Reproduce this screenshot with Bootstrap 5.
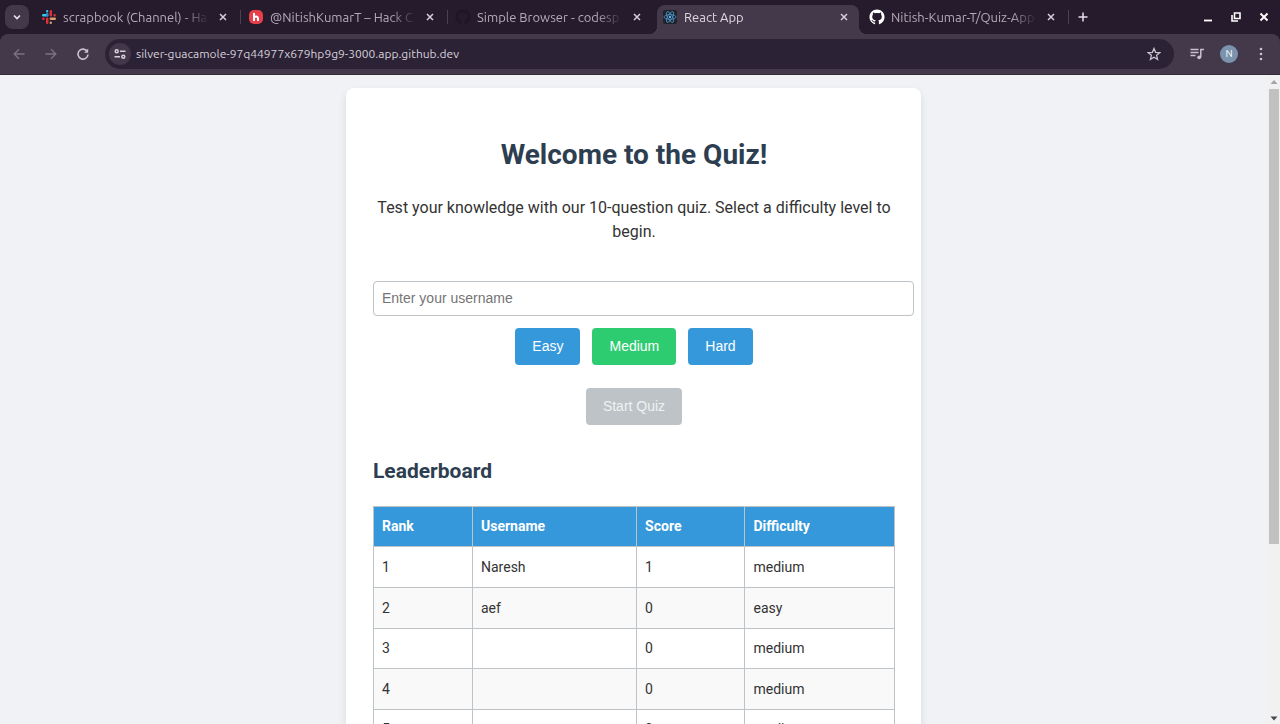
<!DOCTYPE html>
<html lang="en">
<head>
<meta charset="utf-8">
<meta name="viewport" content="width=device-width, initial-scale=1">
<title>React App</title>
<link href="https://cdn.jsdelivr.net/npm/bootstrap@5.3.0/dist/css/bootstrap.min.css" rel="stylesheet">
<style>
  body { font-family: Roboto, sans-serif; background: #f0f2f5; color: #333; }
  button { border: 0; padding: 0; background: none; }
  svg { display: block; flex: none; }

  /* browser chrome */
  .chrome-ui { font-family: Ubuntu, "Noto Sans", sans-serif; font-size: 12px; line-height: 18px; background: #261b2c; color: #b3abb9; }
  .strip { height: 34px; padding-left: 5px; }
  .tab-search { width: 24px; height: 24px; border-radius: 8px; background: #42384a; color: #e6e0ea; margin-right: 5px; }
  .tabs-row { min-width: 0; }
  .tab-item { flex: 0 1 207px; min-width: 0; gap: 6px; padding: 0 10px 0 7px; height: 24px; position: relative; }
  .tab-item.ruled::after { content: ""; position: absolute; right: 0; top: 5px; width: 1px; height: 14px; background: #4b4153; }
  .tab-item a { font-size: 13px; color: inherit; text-decoration: none; white-space: nowrap; overflow: hidden; flex: 1; min-width: 0;
    -webkit-mask-image: linear-gradient(90deg, #000 82%, transparent); mask-image: linear-gradient(90deg, #000 82%, transparent); }
  .tab-item button { width: 16px; height: 16px; color: #d6cfdb; }
  .tab-item.current { color: #ded8e2; z-index: 0; }
  .tab-item.current::before { content: ""; position: absolute; z-index: -1; inset: 0 3px -5px 2px; border-radius: 8px 8px 0 0; background: #44394b; }
  .flare { position: absolute; bottom: -5px; width: 8px; height: 8px; }
  .flare.start { left: -6px; background: radial-gradient(circle at 0 0, transparent 8px, #44394b 8px); }
  .flare.end { right: -5px; background: radial-gradient(circle at 100% 0, transparent 8px, #44394b 8px); }
  .new-tab, .win button { width: 28px; height: 28px; color: #e6e0ea; }
  .win { padding-right: 2px; }
  .toolbar { height: 41px; padding: 0 3px; background: #44394b; border-radius: 8px 8px 0 0; border-bottom: 1px solid #352b3c; }
  .tool { width: 32px; height: 32px; color: #c9c2ce; }
  .tool:disabled { color: #7c7283; }
  .omnibox { height: 30px; border-radius: 15px; background: #2c2235; color: #d6d0da; margin: 0 7px 0 6px; padding: 0 4px; }
  .omnibox input { border: 0; outline: 0; background: none; color: inherit; padding: 0; flex: 1; min-width: 0; }
  .site-info { width: 22px; height: 22px; border-radius: 50%; background: #42384a; color: #d6d0da; margin-right: 5px; }
  .avatar { width: 18px; height: 18px; border-radius: 50%; background: #7b93ad; color: #fff; font-size: 10px; line-height: 18px; }

  /* quiz page */
  .page-area { min-height: 0; }
  .viewport { overflow-y: auto; scrollbar-width: none; padding-top: 13px; }
  .viewport::-webkit-scrollbar { display: none; }
  .quiz { max-width: 575px; background: #fff; border-radius: 8px; padding: 26px 26px 26px 27px; box-shadow: 0 4px 8px rgba(0,0,0,.1); }
  .quiz h1 { font-size: 28px; line-height: 40px; font-weight: 700; color: #2c3e50; margin: 21px 0; }
  .intro { font-size: 16px; line-height: 24px; margin: 0 0 37px; }
  .quiz input { display: block; width: calc(100% + 19px); height: 35px; border: 1px solid #bdc3c7; border-radius: 4px; padding: 0 8px 2px;
    font: 14px "Liberation Sans", Arial, sans-serif; }
  .quiz input::placeholder { color: #757575; opacity: 1; }
  .choices { gap: 12px; margin: 12px 0 23px; }
  .quiz .btn { font: 14px/17px "Liberation Sans", Arial, sans-serif; padding: 10px 17px; height: 37px; border: 0; border-radius: 4px; color: #fff; background: #3498db; }
  .quiz .btn.chosen { background: #2ecc71; }
  .quiz .btn:disabled { background: #bdc3c7; opacity: 1; color: #f0f2f3; }
  .quiz h2 { font-size: 21px; line-height: 30px; font-weight: 700; color: #2c3e50; margin: 31px 0 20px; }
  .board { font-size: 14px; line-height: 23px; width: 100%; border-collapse: collapse; }
  .board th, .board td { border: 1px solid #bdc3c7; padding: 8px; }
  .board tbody tr { height: 41px; }
  .board tbody tr:nth-child(even) { background: #f9f9f9; }
  .board tbody tr:nth-child(odd):not(:first-child) { height: 40px; }
  .board th { background: #3498db; color: #fff; }
  .rail { width: 13px; background: #f1f1f1; padding: 5px 2px 3px; }
  .thumb { width: 10px; background: #c1c1c1; flex: 0 0 71%; }
</style>
</head>
<body>
<div class="d-flex flex-column vh-100 overflow-hidden">
  <header class="chrome-ui">
    <div class="strip d-flex align-items-center">
      <button class="tab-search d-flex align-items-center justify-content-center" aria-label="Search tabs"><svg width="10" height="10" viewBox="0 0 10 10" fill="none" stroke="currentColor" stroke-width="1.7"><path d="M2 3.5 5 6.5 8 3.5"/></svg></button>
      <nav class="tabs-row d-flex flex-grow-1 align-items-center" aria-label="Tabs">
        <div class="tab-item ruled d-flex align-items-center">
          <svg width="16" height="16" viewBox="0 0 16 16" fill="none" stroke-width="2.4" stroke-linecap="round"><path stroke="#36c5f0" d="M2.200 6.300h4M6.200 2.200v.1"/><path stroke="#2590c8" d="M6.200 5v1"/><path stroke="#e0303f" d="M9.800 2.200v4M13.600 6.200v.1"/><path stroke="#d9a06a" d="M9.800 9.800h4M9.800 13.600v.1"/><path stroke="#e0303f" d="M6.200 9.800v4M2.400 9.800v.1"/></svg>
          <a href="#">scrapbook (Channel) - Ha</a>
          <button class="d-flex align-items-center justify-content-center" aria-label="Close"><svg width="8" height="8" viewBox="0 0 8 8" stroke="currentColor" stroke-width="1.5"><path d="m1 1 6 6M7 1 1 7"/></svg></button>
        </div>
        <div class="tab-item ruled d-flex align-items-center">
          <svg width="16" height="16" viewBox="0 0 16 16"><rect x="1" y="1" width="14" height="14" rx="5" fill="#e8404a"/><path d="M6 4v8M6 9.500c0-2.500 4-2.800 4 0V12" fill="none" stroke="#fff" stroke-width="2"/></svg>
          <a href="#">@NitishKumarT – Hack C</a>
          <button class="d-flex align-items-center justify-content-center" aria-label="Close"><svg width="8" height="8" viewBox="0 0 8 8" stroke="currentColor" stroke-width="1.5"><path d="m1 1 6 6M7 1 1 7"/></svg></button>
        </div>
        <div class="tab-item d-flex align-items-center">
          <svg width="16" height="16" viewBox="-.5 -.5 17 17" fill="#1d1624"><path d="M8 0C3.580 0 0 3.580 0 8c0 3.540 2.290 6.530 5.470 7.590.4.070.55-.17.55-.38 0-.19-.01-.82-.01-1.490-2.010.37-2.530-.49-2.690-.94-.09-.23-.48-.94-.82-1.130-.28-.15-.68-.52-.01-.53.63-.01 1.080.58 1.230.82.72 1.210 1.870.87 2.330.66.07-.52.28-.87.51-1.070-1.780-.2-3.640-.89-3.640-3.950 0-.87.31-1.590.82-2.150-.08-.2-.36-1.020.08-2.120 0 0 .67-.21 2.200.82.64-.18 1.320-.27 2-.27s1.360.09 2 .27c1.530-1.040 2.200-.82 2.200-.82.44 1.100.16 1.920.08 2.120.51.56.82 1.270.82 2.150 0 3.070-1.870 3.750-3.650 3.950.29.25.54.73.54 1.480 0 1.070-.01 1.930-.01 2.200 0 .21.15.46.55.38A8 8 0 0 0 16 8c0-4.420-3.580-8-8-8"/></svg>
          <a href="#">Simple Browser - codesp</a>
          <button class="d-flex align-items-center justify-content-center" aria-label="Close"><svg width="8" height="8" viewBox="0 0 8 8" stroke="currentColor" stroke-width="1.5"><path d="m1 1 6 6M7 1 1 7"/></svg></button>
        </div>
        <div class="tab-item current d-flex align-items-center">
          <span class="flare start"></span><span class="flare end"></span>
          <svg width="16" height="16" viewBox="0 0 16 16"><rect x="1" y="1" width="14" height="14" rx="2" fill="#20232a"/><g fill="none" stroke="#4f96d0" stroke-width=".8"><ellipse cx="8" cy="8" rx="6" ry="2.400"/><ellipse cx="8" cy="8" rx="6" ry="2.400" transform="rotate(60 8 8)"/><ellipse cx="8" cy="8" rx="6" ry="2.400" transform="rotate(120 8 8)"/></g><circle cx="8" cy="8" r="1.200" fill="#61bdfb"/></svg>
          <a href="#">React App</a>
          <button class="d-flex align-items-center justify-content-center" aria-label="Close"><svg width="8" height="8" viewBox="0 0 8 8" stroke="currentColor" stroke-width="1.5"><path d="m1 1 6 6M7 1 1 7"/></svg></button>
        </div>
        <div class="tab-item ruled d-flex align-items-center">
          <svg width="16" height="16" viewBox="-.5 -.5 17 17" fill="#fff"><path d="M8 0C3.580 0 0 3.580 0 8c0 3.540 2.290 6.530 5.470 7.590.4.070.55-.17.55-.38 0-.19-.01-.82-.01-1.490-2.010.37-2.530-.49-2.690-.94-.09-.23-.48-.94-.82-1.130-.28-.15-.68-.52-.01-.53.63-.01 1.080.58 1.230.82.72 1.210 1.870.87 2.330.66.07-.52.28-.87.51-1.070-1.780-.2-3.640-.89-3.640-3.950 0-.87.31-1.590.82-2.150-.08-.2-.36-1.020.08-2.120 0 0 .67-.21 2.200.82.64-.18 1.320-.27 2-.27s1.360.09 2 .27c1.530-1.040 2.200-.82 2.200-.82.44 1.100.16 1.920.08 2.120.51.56.82 1.270.82 2.150 0 3.070-1.870 3.750-3.650 3.950.29.25.54.73.54 1.480 0 1.070-.01 1.930-.01 2.200 0 .21.15.46.55.38A8 8 0 0 0 16 8c0-4.420-3.580-8-8-8"/></svg>
          <a href="#">Nitish-Kumar-T/Quiz-App</a>
          <button class="d-flex align-items-center justify-content-center" aria-label="Close"><svg width="8" height="8" viewBox="0 0 8 8" stroke="currentColor" stroke-width="1.5"><path d="m1 1 6 6M7 1 1 7"/></svg></button>
        </div>
        <button class="new-tab d-flex align-items-center justify-content-center" aria-label="New tab"><svg width="10" height="10" viewBox="0 0 10 10" stroke="currentColor" stroke-width="1.5"><path d="M5 .5v9M.5 5h9"/></svg></button>
      </nav>
      <div class="win d-flex">
        <button class="d-flex align-items-center justify-content-center" aria-label="Minimize"><svg width="10" height="10" viewBox="0 0 10 10" stroke="#fff" stroke-width="1.8"><path d="M1 8.500h8"/></svg></button>
        <button class="d-flex align-items-center justify-content-center" aria-label="Restore"><svg width="10" height="10" viewBox="0 0 10 10" fill="none" stroke="#fff" stroke-width="1.600"><path d="M3.500 1h5.500v5.500H3.500zM1 3v6h6"/></svg></button>
        <button class="d-flex align-items-center justify-content-center" aria-label="Close window"><svg width="10" height="10" viewBox="0 0 10 10" stroke="#fff" stroke-width="1.900"><path d="m1.500 1.500 7 7M8.500 1.500l-7 7"/></svg></button>
      </div>
    </div>
    <div class="toolbar d-flex align-items-center">
      <button class="tool d-flex align-items-center justify-content-center" disabled aria-label="Back"><svg width="12" height="12" viewBox="0 0 12 12" fill="none" stroke="currentColor" stroke-width="1.300"><path d="M11.500 6H1.500M6 1.200 1.200 6 6 10.800"/></svg></button>
      <button class="tool d-flex align-items-center justify-content-center" disabled aria-label="Forward"><svg width="12" height="12" viewBox="0 0 12 12" fill="none" stroke="currentColor" stroke-width="1.300"><path d="M.5 6h10M6 1.200 10.800 6 6 10.800"/></svg></button>
      <button class="tool d-flex align-items-center justify-content-center" aria-label="Reload"><svg width="12" height="12" viewBox="0 0 12 12" fill="none" stroke="currentColor" stroke-width="1.600"><path d="M10.400 3.700A5 5 0 1 0 11 6.500"/><path d="M11.200.6v4.100H7.100z" fill="currentColor" stroke="none"/></svg></button>
      <div class="omnibox d-flex align-items-center flex-grow-1">
        <button class="site-info d-flex align-items-center justify-content-center" aria-label="Site information"><svg width="12" height="12" viewBox="0 0 12 12" fill="none" stroke="currentColor" stroke-width="1.500"><circle cx="2.700" cy="3.200" r="1.500"/><path d="M6 3.200h5.500M.5 8.800H6"/><circle cx="9.300" cy="8.800" r="1.500"/></svg></button>
        <input type="text" aria-label="Address" value="silver-guacamole-97q44977x679hp9g9-3000.app.github.dev">
        <button class="tool d-flex align-items-center justify-content-center" aria-label="Bookmark"><svg width="14" height="14" viewBox="0 0 14 14" fill="none" stroke="currentColor" stroke-width="1.300"><path d="m7 1.500 1.600 3.800 4.100.35-3.100 2.700.95 4L7 10.200l-3.550 2.150.95-4-3.100-2.700 4.100-.35z"/></svg></button>
      </div>
      <button class="tool d-flex align-items-center justify-content-center" aria-label="Media"><svg width="14" height="12" viewBox="0 0 14 12" fill="none" stroke="currentColor" stroke-width="1.500"><path d="M.5 1.500h8M.5 4.500h8M.5 7.500h5M10.800 9V1.500H14"/><circle cx="9.200" cy="9.300" r="1.900" fill="currentColor" stroke="none"/></svg></button>
      <button class="tool d-flex align-items-center justify-content-center" aria-label="Profile"><span class="avatar">N</span></button>
      <button class="tool d-flex align-items-center justify-content-center" aria-label="Menu"><svg width="4" height="14" viewBox="0 0 4 14" fill="currentColor"><circle cx="2" cy="2" r="1.300"/><circle cx="2" cy="7" r="1.300"/><circle cx="2" cy="12" r="1.300"/></svg></button>
    </div>
  </header>

  <div class="page-area d-flex flex-grow-1">
    <main class="viewport flex-grow-1">
      <section class="quiz mx-auto">
        <h1 class="text-center">Welcome to the Quiz!</h1>
        <p class="intro text-center">Test your knowledge with our 10-question quiz. Select a difficulty level to begin.</p>
        <input type="text" placeholder="Enter your username" aria-label="Username">
        <div class="choices d-flex justify-content-center">
          <button type="button" class="btn">Easy</button>
          <button type="button" class="btn chosen">Medium</button>
          <button type="button" class="btn">Hard</button>
        </div>
        <div class="text-center"><button type="button" class="btn" disabled>Start Quiz</button></div>
        <h2>Leaderboard</h2>
        <table class="board">
          <colgroup><col style="width:19%"><col style="width:31.500%"><col style="width:20.800%"><col></colgroup>
          <thead><tr><th>Rank</th><th>Username</th><th>Score</th><th>Difficulty</th></tr></thead>
          <tbody>
            <tr><td>1</td><td>Naresh</td><td>1</td><td>medium</td></tr>
            <tr><td>2</td><td>aef</td><td>0</td><td>easy</td></tr>
            <tr><td>3</td><td></td><td>0</td><td>medium</td></tr>
            <tr><td>4</td><td></td><td>0</td><td>medium</td></tr>
            <tr><td>5</td><td></td><td>0</td><td>medium</td></tr>
          </tbody>
        </table>
      </section>
    </main>
    <div class="rail d-flex flex-column align-items-center" aria-hidden="true">
      <svg class="mb-1" width="8" height="5" viewBox="0 0 8 5"><path d="m4 0 3.500 4h-7z" fill="#a3a3a8"/></svg>
      <div class="thumb"></div>
      <svg class="mt-auto" width="8" height="5" viewBox="0 0 8 5"><path d="M.5.5h7l-3.500 4z" fill="#4b4550"/></svg>
    </div>
  </div>
</div>
<script src="https://cdn.jsdelivr.net/npm/bootstrap@5.3.0/dist/js/bootstrap.bundle.min.js"></script>
</body>
</html>
